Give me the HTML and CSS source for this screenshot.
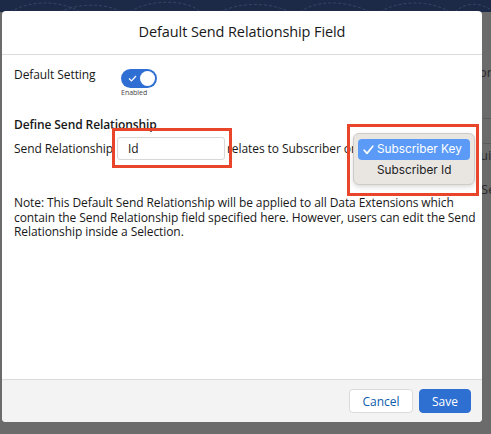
FILE: index.html
```html
<!DOCTYPE html>
<html>
<head>
<meta charset="utf-8">
<link rel="stylesheet" href="styles.css">
</head>
<body>
<div class="screen">
  <div class="topbar">
    <svg class="pattern" width="491" height="12" viewBox="0 0 491 12">
      <g fill="none" stroke="#3a4b6c" stroke-width="0.8" stroke-dasharray="3 2">
        <path d="M10 12 C30 0 60 0 80 12"/>
        <path d="M60 12 C80 2 110 4 120 12"/>
        <path d="M130 12 C150 -2 190 0 200 12"/>
        <path d="M220 12 C240 2 270 2 290 12"/>
        <path d="M300 12 C320 -2 350 2 370 12"/>
        <path d="M380 12 C400 0 430 0 450 12"/>
        <path d="M455 12 C465 2 480 2 491 10"/>
      </g>
    </svg>
  </div>
  <div class="behind">
    <div class="bg-row r1">on</div>
    <div class="bg-line l1"></div>
    <div class="bg-line l2"></div>
    <div class="bg-row r2">ui</div>
    <div class="bg-row r3">Se</div>
  </div>

  <div class="modal">
    <header class="modal-header">
      <h2 class="modal-title">Default Send Relationship Field</h2>
    </header>
    <section class="modal-body">
      <div class="setting-row">
        <span class="setting-label">Default Setting</span>
        <div class="toggle-wrap">
          <span class="toggle">
            <svg class="toggle-check" width="9" height="7" viewBox="0 0 9 7"><path d="M1 3.5 L3.5 6 L8 1" fill="none" stroke="#fff" stroke-width="1.2"/></svg>
            <span class="toggle-knob"></span>
          </span>
          <span class="toggle-text">Enabled</span>
        </div>
      </div>
      <h3 class="section-title">Define Send Relationship</h3>
      <div class="relation-row">
        <span class="rel-label">Send Relationship</span>
        <span class="rel-input">Id</span>
        <span class="rel-text">relates to Subscriber on</span>
      </div>
      <p class="note">Note: This Default Send Relationship will be applied to all Data Extensions which contain the Send Relationship field specified here. However, users can edit the Send Relationship inside a Selection.</p>

      <div class="hl hl-input"></div>
      <div class="menu">
        <div class="menu-item selected"><svg class="check" width="11" height="10" viewBox="0 0 11 10"><path d="M1.2 5.2 L4 8.4 L9.8 1.2" fill="none" stroke="#fff" stroke-width="1.7" stroke-linecap="round" stroke-linejoin="round"/></svg>Subscriber Key</div>
        <div class="menu-item">Subscriber Id</div>
      </div>
      <div class="hl hl-menu"></div>
    </section>
    <footer class="modal-footer">
      <button class="btn btn-neutral">Cancel</button>
      <button class="btn btn-brand">Save</button>
    </footer>
  </div>
</div>
</body>
</html>
```

FILE: styles.css
```css
html, body {
  margin: 0;
  padding: 0;
}
body {
  width: 491px;
  height: 434px;
  overflow: hidden;
  background: #6b6b6b;
  font-family: "Open Sans", "Lato", sans-serif;
  color: #181818;
}
.screen {
  position: relative;
  width: 491px;
  height: 434px;
  background: #6b6b6b;
}
.topbar {
  height: 12px;
  background: #1c2a48;
  overflow: hidden;
}
.pattern {
  display: block;
}
.behind {
  position: absolute;
  left: 483px;
  top: 12px;
  width: 8px;
  height: 420px;
  color: #2a2a2a;
  font-size: 13px;
}
.bg-row {
  position: absolute;
  left: 0;
  white-space: nowrap;
  line-height: 14px;
}
.r1 { top: 53px; left: -4px; }
.r2 { top: 136px; left: -3px; }
.r3 { top: 170px; left: -2px; }
.bg-line {
  position: absolute;
  left: 0;
  width: 10px;
  height: 1px;
  background: #5a5a5a;
}
.l1 { top: 106px; }
.l2 { top: 131px; }

.modal {
  position: absolute;
  left: 2px;
  top: 11px;
  width: 480px;
  height: 411px;
  background: #fff;
  border-radius: 4px;
  display: flex;
  flex-direction: column;
  overflow: hidden;
}
.modal-header {
  height: 43px;
  border-bottom: 1px solid #dddbda;
  display: flex;
  align-items: center;
  justify-content: center;
  flex-shrink: 0;
}
.modal-title {
  margin: 0 0 2px 0;
  font-size: 14.5px;
  font-weight: 400;
  color: #181818;
  letter-spacing: -0.1px;
}
.modal-body {
  position: relative;
  flex: 1;
  padding: 12px 12px 0 12px;
  font-size: 12px;
  letter-spacing: -0.08px;
}
.setting-row {
  display: flex;
  align-items: flex-start;
}
.setting-label {
  width: 107px;
  line-height: 16px;
}
.toggle-wrap {
  display: flex;
  flex-direction: column;
  align-items: flex-start;
  margin-top: 2px;
}
.toggle {
  position: relative;
  width: 36px;
  height: 19px;
  border-radius: 10px;
  background: #2f6fd3;
  display: block;
}
.toggle-check {
  position: absolute;
  left: 7px;
  top: 6px;
}
.toggle-knob {
  position: absolute;
  right: 2px;
  top: 2px;
  width: 15px;
  height: 15px;
  border-radius: 50%;
  background: #fff;
}
.toggle-text {
  font-size: 7px;
  color: #444;
  line-height: 9px;
  letter-spacing: 0;
}
.section-title {
  margin: 20px 0 0 0;
  font-size: 12px;
  font-weight: 600;
  line-height: 16px;
  letter-spacing: -0.1px;
}
.relation-row {
  display: flex;
  align-items: center;
  margin-top: 4px;
  white-space: nowrap;
}
.rel-label {
  width: 103px;
}
.rel-input {
  box-sizing: border-box;
  width: 108px;
  height: 23px;
  border: 1px solid #d8d8d8;
  border-radius: 3px;
  padding: 0 10px;
  line-height: 21px;
  font-size: 12px;
}
.rel-text {
  margin-left: 2px;
}
.note {
  margin: 36px 0 0 0;
  font-size: 12px;
  line-height: 14.5px;
  width: 462px;
}
.hl {
  position: absolute;
  border: 3px solid #e8452a;
  box-sizing: border-box;
}
.hl-input {
  left: 110px;
  top: 73px;
  width: 120px;
  height: 40px;
}
.hl-menu {
  left: 345px;
  top: 69px;
  width: 132px;
  height: 72px;
}
.menu {
  position: absolute;
  left: 351px;
  top: 78px;
  width: 122px;
  height: 52px;
  box-sizing: border-box;
  background: #e9e6e2;
  border: 1px solid #cfcbc6;
  border-radius: 6px;
  padding: 5px 4px;
  box-shadow: 0 2px 5px rgba(0,0,0,0.15);
  font-family: "Inter", "Open Sans", sans-serif;
  font-size: 11.8px;
  letter-spacing: 0;
}
.menu-item {
  height: 21px;
  line-height: 21px;
  padding-left: 19px;
  position: relative;
  color: #222;
  border-radius: 4px;
}
.menu-item.selected {
  background: #5b9bf7;
  color: #fff;
}
.check {
  position: absolute;
  left: 5px;
  top: 6px;
}
.modal-footer {
  flex-shrink: 0;
  height: 42px;
  border-top: 1px solid #dddbda;
  background: #f3f3f3;
  display: flex;
  align-items: center;
  justify-content: flex-end;
  padding: 0 11px;
  gap: 6px;
}
.btn {
  height: 24px;
  border-radius: 4px;
  font-family: "Open Sans", sans-serif;
  font-size: 12px;
  padding: 0 12px;
  cursor: pointer;
}
.btn-neutral {
  background: #fff;
  border: 1px solid #dddbda;
  color: #0b5cab;
  width: 64px;
}
.btn-brand {
  background: #2e6fd2;
  border: 1px solid #2e6fd2;
  color: #fff;
  width: 52px;
}
```
